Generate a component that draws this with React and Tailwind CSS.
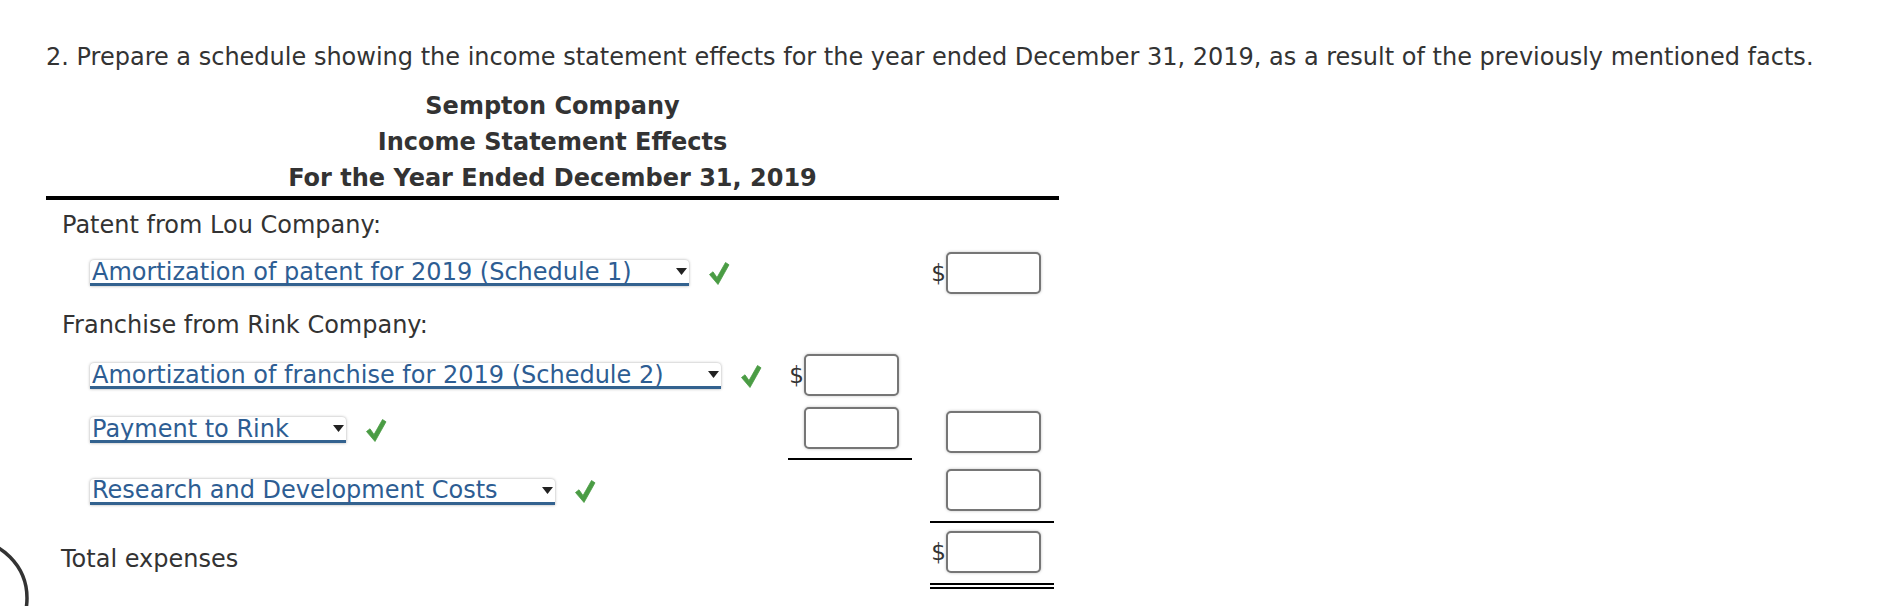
import React from 'react';

function Check() {
  return (
    <svg width="22" height="25" viewBox="0 0 22 25" className="ml-[19px] shrink-0">
      <path d="M1.5 13.5 L5 10.8 L9 16.5 L17.5 1.5 L21 3.8 L10 23.5 Z" fill="#4a9c44" stroke="#4a9c44" strokeWidth="0.8" strokeLinejoin="round" />
    </svg>
  );
}

function Dropdown({ label }) {
  return (
    <div className="flex items-center">
      <div className="flex items-center h-[26px] pl-[2px] pr-[2px] bg-white rounded-t-[4px] border-b-[3px] border-[#33628f] shadow-[0_0_3px_rgba(0,0,0,0.35)]">
        <span className="text-[24px] leading-[24px] text-[#2d5d93] whitespace-nowrap">{label}</span>
        <svg width="11" height="7" viewBox="0 0 11 7" className="ml-[44px]">
          <path d="M0 0 L11 0 L5.5 7 Z" fill="#222" />
        </svg>
      </div>
      <Check />
    </div>
  );
}

function Amount({ dollar }) {
  return (
    <div className="flex items-center">
      <span className="w-[16px] text-right text-[23px] leading-[24px] text-[#333]">{dollar ? '$' : ''}</span>
      <div className="w-[95px] h-[42px] rounded-[5px] border-2 border-[#767676] bg-white shadow-[0_0_3px_rgba(0,0,0,0.25)]" />
    </div>
  );
}

export default function App() {
  return (
    <div className="relative min-h-[606px] w-[1902px] overflow-hidden bg-white text-[#333] font-['DejaVu_Sans','Verdana',sans-serif]">
      <p className="pl-[46px] pt-[42px] text-[24px] leading-[30px]">
        2. Prepare a schedule showing the income statement effects for the year ended December 31, 2019, as a result of the previously mentioned facts.
      </p>

      <div className="ml-[46px] w-[1013px]">
        {/* heading */}
        <div className="mt-[16px] text-center font-bold text-[24px] leading-[36px] border-b-4 border-black">
          <div>Sempton Company</div>
          <div>Income Statement Effects</div>
          <div>For the Year Ended December 31, 2019</div>
        </div>

        {/* Patent section */}
        <div className="flex items-center h-[50px] pl-[16px] text-[24px]">Patent from Lou Company:</div>
        <div className="flex h-[46px]">
          <div className="flex-1 flex items-center pl-[44px]">
            <Dropdown label="Amortization of patent for 2019 (Schedule 1)" />
          </div>
          <div className="w-[124px]" />
          <div className="w-[18px]" />
          <div className="w-[124px] flex items-center">
            <Amount dollar />
          </div>
          <div className="w-[5px]" />
        </div>

        {/* Franchise section */}
        <div className="flex items-center h-[58px] pl-[16px] text-[24px]">Franchise from Rink Company:</div>
        <div className="flex h-[44px]">
          <div className="flex-1 flex items-center pl-[44px]">
            <Dropdown label="Amortization of franchise for 2019 (Schedule 2)" />
          </div>
          <div className="w-[124px] flex items-start">
            <Amount dollar />
          </div>
          <div className="w-[18px]" />
          <div className="w-[124px]" />
          <div className="w-[5px]" />
        </div>

        <div className="flex h-[62px]">
          <div className="flex-1 flex items-center pl-[44px] pt-[2px]">
            <Dropdown label="Payment to Rink" />
          </div>
          <div className="w-[124px] pt-[9px] border-b-2 border-black">
            <Amount />
          </div>
          <div className="w-[18px]" />
          <div className="w-[124px] pt-[13px]">
            <Amount />
          </div>
          <div className="w-[5px]" />
        </div>

        {/* R&D */}
        <div className="flex h-[63px]">
          <div className="flex-1 flex items-center pl-[44px]">
            <Dropdown label="Research and Development Costs" />
          </div>
          <div className="w-[124px]" />
          <div className="w-[18px]" />
          <div className="w-[124px] pt-[9px] border-b-2 border-black">
            <Amount />
          </div>
          <div className="w-[5px]" />
        </div>

        {/* Total */}
        <div className="flex h-[66px]">
          <div className="flex-1 pl-[15px] pt-[21px] text-[24px] leading-[30px]">Total expenses</div>
          <div className="w-[124px]" />
          <div className="w-[18px]" />
          <div className="w-[124px] pt-[8px] border-b-[6px] border-double border-black">
            <Amount dollar />
          </div>
          <div className="w-[5px]" />
        </div>
      </div>

      {/* partially visible round button on the left edge */}
      <svg width="40" height="66" viewBox="0 0 40 66" className="absolute left-0 top-[542px]">
        <circle cx="-31" cy="56" r="58" fill="white" stroke="#333" strokeWidth="3.5" />
      </svg>
    </div>
  );
}
